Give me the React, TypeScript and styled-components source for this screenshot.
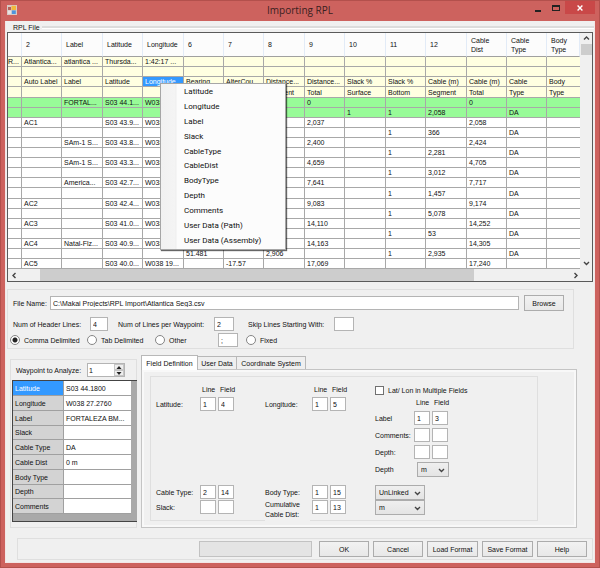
import React, { useState } from 'react';
import styled, { createGlobalStyle, css } from 'styled-components';

const GlobalStyle = createGlobalStyle`
  * { box-sizing: border-box; }
  html, body { margin: 0; padding: 0; }
  body, input, select, button, table {
    font-family: "Liberation Sans", Arial, sans-serif;
    font-size: 7px;
    line-height: 9px;
    color: #101010;
  }
`;

const Window = styled.div`
  min-height: 100vh;
  display: flex;
  flex-direction: column;
  background: #cd625e;
  border: 1px solid #b3504c;
  padding: 0 4px 4px;
`;

const TitleBar = styled.header`
  display: grid;
  grid-template-columns: 1fr auto 1fr;
  height: 20px;
  flex: none;
`;

const AppIcon = styled.svg`
  width: 10px;
  height: 10px;
  margin: 4px 0 0 2px;
`;

const Title = styled.h1`
  margin: 0;
  font-family: "Open Sans", "Noto Sans", sans-serif;
  font-size: 10px;
  font-weight: 400;
  line-height: 19px;
  color: #3a1f1e;
`;

const Controls = styled.div`
  display: flex;
  justify-content: flex-end;
  align-items: flex-start;
`;

const ControlButton = styled.button<{ $close?: boolean }>`
  display: flex;
  align-items: center;
  justify-content: center;
  width: ${p => (p.$close ? 30 : 18)}px;
  height: 13px;
  padding: 0;
  border: 0;
  background: ${p => (p.$close ? '#c94848' : 'transparent')};
`;

const Client = styled.main`
  flex: 1;
  display: flex;
  flex-direction: column;
  background: #f0f0f0;
  border: 1px solid #f3e6e6;
  border-top: 0;
`;

const LegendRow = styled.div`
  display: flex;
  align-items: center;
  gap: 2px;
  height: 11px;
  padding: 2px 0 0 7px;
  &::after {
    content: '';
    flex: 1;
    height: 2px;
    background: #dcdcdc;
    border-bottom: 1px solid #fff;
  }
`;

const GridFrame = styled.section`
  position: relative;
  display: grid;
  grid-template-columns: 1fr 12px;
  margin: 0 1px;
  border: 1px solid #5a5a5a;
  background: #fff;
`;

const DataGrid = styled.table`
  width: 100%;
  table-layout: fixed;
  border-collapse: separate;
  border-spacing: 0;
`;

const HeadCell = styled.th`
  height: 24px;
  padding: 0 8px 0 4px;
  font-weight: 400;
  text-align: left;
  vertical-align: middle;
  background: #fcfcfc;
  border-right: 1px solid #e2ebf7;
  border-bottom: 1px solid #a0a0a0;
`;

const GridRow = styled.tr<{ $tone: string }>`
  background: ${p => p.$tone};
  height: 10px;
  &:nth-child(10n + 4) { height: 11px; }
`;

const GridCell = styled.td<{ $selected?: boolean }>`
  padding: 0 0 0 2px;
  white-space: nowrap;
  overflow: hidden;
  border-right: 1px solid #a8a8a8;
  border-bottom: 1px solid #a8a8a8;
  &:first-child { padding-left: 0; }
  &:last-child { border-right: 0; }
  ${p => p.$selected && css`background: #3399ff; color: #fff;`}
`;

const VScroll = styled.div`
  display: flex;
  flex-direction: column;
  align-items: center;
  background: #f0f0f0;
`;

const HScroll = styled.div`
  grid-column: 1 / -1;
  display: flex;
  align-items: center;
  height: 12px;
  padding-right: 11px;
  background: #f0f0f0;
`;

const ScrollButton = styled.button`
  display: flex;
  align-items: center;
  justify-content: center;
  width: 12px;
  height: 11px;
  padding: 0;
  border: 0;
  background: transparent;
`;

const VThumb = styled.div`
  align-self: stretch;
  height: 11px;
  margin-left: 1px;
  background: #cdcdcd;
`;

const VSpace = styled.div` flex: 1; `;

const HTrack = styled.div`
  flex: 1;
  align-self: stretch;
  display: flex;
  padding-left: 20px;
`;

const HThumb = styled.div`
  width: 82%;
  background: #cdcdcd;
`;

const Menu = styled.div`
  position: absolute;
  left: 152px;
  top: 50px;
  width: 126px;
  height: 167px;
  padding: 1px;
  display: grid;
  grid-auto-rows: 1fr;
  background: linear-gradient(to right, #f1f1f1 0, #f4f4f4 14px, #eeeeee 15px, #fcfcfc 16px);
  border: 1px solid #a6a6a6;
  box-shadow: 1px 1px 1px rgba(0, 0, 0, 0.6);
`;

const MenuItem = styled.button`
  padding: 0 0 0 22px;
  border: 0;
  background: transparent;
  text-align: left;
  font-family: Roboto, "Open Sans", sans-serif;
  font-size: 8px;
  line-height: 12px;
`;

const groupBorder = css`
  border: 1px solid #dfdfdf;
`;

const FileGroup = styled.section`
  ${groupBorder}
  display: flex;
  flex-direction: column;
  margin: 7px 20px 0 1px;
  padding: 5px 9px 1px 2px;
`;

const FileRow = styled.div`
  display: grid;
  grid-template-columns: 37px 1fr 40px;
  align-items: center;
  padding-left: 3px;
`;

const CountRow = styled.div`
  display: grid;
  grid-template-columns: 77px 18px 106px 20px 100px 20px;
  align-items: center;
  padding: 6px 0 2px 3px;
`;

const DelimiterRow = styled.div`
  display: grid;
  grid-template-columns: 77px 68px 63px 20px 1fr;
  align-items: center;
`;

const Caption = styled.label<{ $lead?: number }>`
  padding-left: ${p => p.$lead ?? 0}px;
  white-space: nowrap;
`;

const TextBox = styled.input`
  width: 100%;
  min-width: 0;
  height: 14px;
  padding: 0 2px;
  background: #fff;
  border: 1px solid #b4b4b4;
  border-radius: 0;
  outline: 0;
`;

const PathBox = styled(TextBox)`
  width: calc(100% - 5px);
`;

const Button = styled.button<{ $width?: number }>`
  width: ${p => p.$width ?? 50}px;
  height: 16px;
  padding: 0;
  white-space: nowrap;
  background: linear-gradient(#f2f2f2, #e8e8e8);
  border: 1px solid #acacac;
`;

const Option = styled.label<{ $lead?: number }>`
  display: flex;
  align-items: center;
  gap: 4px;
  padding-left: ${p => p.$lead ?? 0}px;
  white-space: nowrap;
`;

const Radio = styled.input`
  appearance: none;
  flex: none;
  width: 10px;
  height: 10px;
  margin: 0;
  border: 1px solid #858585;
  border-radius: 50%;
  background: #fff;
  &:checked { background: radial-gradient(circle, #222 2px, #fff 3px); }
`;

const CheckBox = styled.input`
  appearance: none;
  flex: none;
  width: 9px;
  height: 9px;
  margin: 0;
  border: 1px solid #707070;
  background: #fff;
  &:checked { background: #444; }
`;

const Lower = styled.div`
  display: flex;
  gap: 4px;
  padding: 6px 17px 0 4px;
`;

const WaypointGroup = styled.section`
  ${groupBorder}
  flex: none;
  width: 127px;
  margin-top: 4px;
  padding: 0 0 5px 1px;
`;

const WaypointHeader = styled.div`
  display: grid;
  grid-template-columns: 71px 38px;
  align-items: center;
  height: 20px;
  padding-left: 4px;
`;

const Spinner = styled.div`
  display: flex;
  height: 14px;
  background: #fff;
  border: 1px solid #b4b4b4;
`;

const SpinInput = styled.input`
  flex: 1;
  min-width: 0;
  padding: 0 1px;
  border: 0;
  outline: 0;
  appearance: textfield;
  &::-webkit-inner-spin-button { appearance: none; margin: 0; }
`;

const SpinButtons = styled.div`
  display: flex;
  flex-direction: column;
  width: 10px;
`;

const SpinButton = styled.button`
  flex: 1;
  display: flex;
  align-items: center;
  justify-content: center;
  padding: 0;
  border: 1px solid #c6c6c6;
  background: #efefef;
  min-height: 0;
`;

const WaypointFrame = styled.div`
  height: 142px;
  margin-right: -1px;
  background: #a9a9a9;
  border: 1px solid #444;
  border-right: 0;
`;

const WaypointTable = styled.table`
  width: 118px;
  table-layout: fixed;
  border-collapse: separate;
  border-spacing: 0;
`;

const WaypointRow = styled.tr`
  height: 15px;
  &:nth-child(4n) { height: 14px; }
`;

const WaypointName = styled.th<{ $selected: boolean }>`
  width: 51px;
  padding: 0 0 0 2px;
  font-weight: 400;
  text-align: left;
  background: ${p => (p.$selected ? '#3399ff' : '#d3d3d3')};
  color: ${p => (p.$selected ? '#fff' : '#101010')};
  border-right: 1px solid #a0a0a0;
  border-bottom: 1px solid #a0a0a0;
`;

const WaypointValue = styled.td`
  padding: 0 0 0 2px;
  white-space: nowrap;
  background: #fff;
  border-bottom: 1px solid #a0a0a0;
`;

const Tabs = styled.section`
  flex: 1;
  display: flex;
  flex-direction: column;
`;

const TabList = styled.div`
  display: flex;
  align-items: flex-end;
  height: 14px;
`;

const Tab = styled.button<{ $active: boolean; $width: number }>`
  width: ${p => p.$width}px;
  height: ${p => (p.$active ? 15 : 13)}px;
  margin-bottom: ${p => (p.$active ? -1 : 0)}px;
  padding: 0;
  white-space: nowrap;
  background: ${p => (p.$active ? '#fff' : '#efefef')};
  border: 1px solid #b8b8b8;
  border-bottom: 0;
  border-left-width: ${p => (p.$active ? 1 : 0)}px;
  z-index: ${p => (p.$active ? 1 : 0)};
`;

const TabPanel = styled.div`
  flex: 1;
  padding: 6px 38px 6px 7px;
  background: #f0f0f0;
  border: 1px solid #c4c4c4;
  box-shadow: inset 0 0 0 2px #f8f8f8;
`;

const FieldGroup = styled.div`
  ${groupBorder}
  height: 100%;
  margin-left: 1px;
  padding: 8px 0 5px 5px;
`;

const Sections = styled.div`
  display: grid;
  grid-template-columns: 109px 110px 1fr;
  align-items: start;
  & + & { margin-top: 8px; }
`;

const FieldTable = styled.div<{ $label: number; $gap: number }>`
  display: grid;
  grid-template-columns: ${p => p.$label}px 16px 16px;
  column-gap: 2px;
  row-gap: ${p => p.$gap}px;
  align-items: center;
`;

const ColumnName = styled.span<{ $first?: boolean }>`
  ${p => p.$first && css`grid-column: 2;`}
  height: 10px;
  padding-left: 2px;
  line-height: 10px;
`;

const WideCheck = styled(Option)`
  grid-column: 1 / -1;
  height: 10px;
`;

const WrappedCaption = styled.label`
  align-self: start;
  height: 22px;
  margin-bottom: -8px;
  line-height: 10px;
  background: #f0f0f0;
`;

const Fields = styled.div`
  display: flex;
  flex-direction: column;
`;

const SelectBox = styled.div<{ $width: number }>`
  position: relative;
  width: ${p => p.$width}px;
  & > svg {
    position: absolute;
    right: 4px;
    top: 5px;
    pointer-events: none;
  }
`;

const Select = styled.select`
  appearance: none;
  display: block;
  width: 100%;
  height: 15px;
  padding: 0 3px;
  background: linear-gradient(#efefef, #e4e4e4);
  border: 1px solid #acacac;
  border-radius: 0;
`;

const UnitCell = styled.div`
  grid-column: 2 / -1;
  padding-left: 3px;
`;

const Footer = styled.footer`
  ${groupBorder}
  display: flex;
  justify-content: flex-end;
  align-items: center;
  gap: 4px;
  height: 22px;
  margin: 10px 1px 1px 11px;
  padding-right: 5px;
`;

const Progress = styled.div`
  width: 113px;
  height: 16px;
  margin-right: 3px;
  background: #e4e4e4;
  border: 1px solid #c2c2c2;
`;

const Chevron = ({ dir }: { dir: 'up' | 'down' | 'left' | 'right' }) => {
  const paths = {
    up: 'M1 4.5 3.5 2 6 4.5',
    down: 'M1 2 3.5 4.5 6 2',
    left: 'M4.5 1 2 3.5 4.5 6',
    right: 'M2.5 1 5 3.5 2.5 6',
  };
  return (
    <svg width="7" height="7" viewBox="0 0 7 7" aria-hidden="true">
      <path d={paths[dir]} fill="none" stroke="#444" strokeWidth="1.4" />
    </svg>
  );
};

const Triangle = ({ up }: { up?: boolean }) => (
  <svg width="6" height="3" viewBox="0 0 6 3" aria-hidden="true">
    <path d={up ? 'M0.5 3 3 0 5.5 3Z' : 'M0.5 0 3 3 5.5 0Z'} fill="#222" />
  </svg>
);

const columnWidths = [14, 40, 41, 40, 41, 40, 40, 41, 40, 41, 40, 41, 40, 40];

const headers = [
  '', '2', 'Label', 'Latitude', 'Longitude', '6', '7', '8', '9', '10', '11', '12',
  'Cable Dist', 'Cable Type', 'Body Type',
];

const cream = '#ffffe1';
const green = '#98fb98';
const white = '#ffffff';

type RowData = { tone: string; cells: Record<number, string> };

const point = (auto: string, label: string, lat: string, dist: string, cable: string, tone = white, lon = 'W038 27...'): RowData => ({
  tone,
  cells: { 1: auto, 2: label, 3: lat, 4: lon, 8: dist, 12: cable },
});

const leg = (cable: string, extra: Record<number, string> = {}, tone = white): RowData => ({
  tone,
  cells: { 10: '1', 11: cable, 13: 'DA', ...extra },
});

const rows: RowData[] = [
  { tone: cream, cells: { 0: 'R...', 1: 'Atlantica...', 2: 'atlantica ...', 3: 'Thursda...', 4: '1:42:17 ...' } },
  { tone: cream, cells: {} },
  {
    tone: cream,
    cells: {
      1: 'Auto Label', 2: 'Label', 3: 'Latitude', 4: 'Longitude', 5: 'Bearing', 6: 'AlterCou...',
      7: 'Distance...', 8: 'Distance...', 9: 'Slack %', 10: 'Slack %', 11: 'Cable (m)',
      12: 'Cable (m)', 13: 'Cable', 14: 'Body',
    },
  },
  {
    tone: cream,
    cells: { 7: 'Segment', 8: 'Total', 9: 'Surface', 10: 'Bottom', 11: 'Segment', 12: 'Total', 13: 'Type', 14: 'Type' },
  },
  point('', 'FORTAL...', 'S03 44.1...', '0', '0', green),
  leg('2,058', { 9: '1' }, green),
  point('AC1', '', 'S03 43.9...', '2,037', '2,058'),
  leg('366'),
  point('', 'SAm-1 S...', 'S03 43.8...', '2,400', '2,424'),
  leg('2,281'),
  point('', 'SAm-1 S...', 'S03 43.3...', '4,659', '4,705'),
  leg('3,012'),
  point('', 'America...', 'S03 42.7...', '7,641', '7,717'),
  leg('1,457'),
  point('AC2', '', 'S03 42.4...', '9,083', '9,174'),
  leg('5,078'),
  point('AC3', '', 'S03 41.0...', '14,110', '14,252'),
  leg('53'),
  point('AC4', 'Natal-Flz...', 'S03 40.9...', '14,163', '14,305'),
  leg('2,935', { 5: '51.481', 7: '2,906' }),
  { tone: white, cells: { 1: 'AC5', 3: 'S03 40.0...', 4: 'W038 19...', 6: '-17.57', 8: '17,069', 12: '17,240' } },
];

const menuItems = [
  'Latitude', 'Longitude', 'Label', 'Slack', 'CableType', 'CableDist', 'BodyType', 'Depth',
  'Comments', 'User Data (Path)', 'User Data (Assembly)',
];

const waypoint = [
  ['Latitude', 'S03 44.1800'],
  ['Longitude', 'W038 27.2760'],
  ['Label', 'FORTALEZA BM...'],
  ['Slack', ''],
  ['Cable Type', 'DA'],
  ['Cable Dist', '0 m'],
  ['Body Type', ''],
  ['Depth', ''],
  ['Comments', ''],
];

const tabs = [
  { name: 'Field Definition', width: 57 },
  { name: 'User Data', width: 39 },
  { name: 'Coordinate System', width: 69 },
];

const Pair = ({ id, name, line, field, wrapped }: {
  id: string; name: string; line: string; field: string; wrapped?: boolean;
}) => (
  <>
    {wrapped
      ? <WrappedCaption htmlFor={id}>{name}</WrappedCaption>
      : <Caption htmlFor={id}>{name}</Caption>}
    <TextBox id={id} defaultValue={line} />
    <TextBox aria-label={`${name} field`} defaultValue={field} />
  </>
);

const ColumnNames = () => (
  <>
    <ColumnName $first>Line</ColumnName>
    <ColumnName>Field</ColumnName>
  </>
);

const DropDown = ({ id, label, width, options }: {
  id: string; label?: string; width: number; options: string[];
}) => (
  <SelectBox $width={width}>
    <Select id={id} aria-label={label}>
      {options.map(o => <option key={o}>{o}</option>)}
    </Select>
    <Chevron dir="down" />
  </SelectBox>
);

export default function App() {
  const [delimiter, setDelimiter] = useState('comma');
  const [index, setIndex] = useState(1);
  const [tab, setTab] = useState(0);

  const radio = (value: string, text: string, lead = 0) => (
    <Option $lead={lead}>
      <Radio
        type="radio"
        name="delimiter"
        checked={delimiter === value}
        onChange={() => setDelimiter(value)}
      />
      {text}
    </Option>
  );

  return (
    <>
      <GlobalStyle />
      <Window>
        <TitleBar>
          <AppIcon viewBox="0 0 10 10" aria-hidden="true">
            <rect width="10" height="10" fill="#d9c9c4" />
            <rect x="1" y="2" width="3" height="3" fill="#b5645c" />
            <rect x="4.5" y="0.8" width="4.5" height="4.2" fill="#f3b93a" />
            <rect x="1" y="5.6" width="3.4" height="3.2" fill="#e9e4e4" />
            <rect x="4.8" y="5.4" width="4" height="3.6" fill="#4f94dc" />
          </AppIcon>
          <Title>Importing RPL</Title>
          <Controls>
            <ControlButton aria-label="Minimize">
              <svg width="6" height="10" viewBox="0 0 6 10"><path d="M0 7h6v2H0z" fill="#222" /></svg>
            </ControlButton>
            <ControlButton aria-label="Maximize">
              <svg width="8" height="6" viewBox="0 0 8 6"><path d="M0 0h8v6H0zM1 2v3h6V2z" fill="#222" fillRule="evenodd" /></svg>
            </ControlButton>
            <ControlButton $close aria-label="Close">
              <svg width="6" height="6" viewBox="0 0 6 6"><path d="M.6.6 5.4 5.4M5.4.6.6 5.4" stroke="#fff" strokeWidth="1.4" /></svg>
            </ControlButton>
          </Controls>
        </TitleBar>

        <Client>
          <LegendRow>RPL File</LegendRow>
          <GridFrame>
            <DataGrid>
              <colgroup>
                {columnWidths.map((w, i) => <col key={i} width={w} />)}
                <col />
              </colgroup>
              <thead>
                <tr>{headers.map((h, i) => <HeadCell key={i}>{h}</HeadCell>)}</tr>
              </thead>
              <tbody>
                {rows.map((row, r) => (
                  <GridRow key={r} $tone={row.tone}>
                    {headers.map((_, c) => (
                      <GridCell key={c} $selected={r === 2 && c === 4}>{row.cells[c]}</GridCell>
                    ))}
                  </GridRow>
                ))}
              </tbody>
            </DataGrid>
            <VScroll>
              <ScrollButton aria-label="Scroll up"><Chevron dir="up" /></ScrollButton>
              <VThumb />
              <VSpace />
              <ScrollButton aria-label="Scroll down"><Chevron dir="down" /></ScrollButton>
            </VScroll>
            <HScroll>
              <ScrollButton aria-label="Scroll left"><Chevron dir="left" /></ScrollButton>
              <HTrack><HThumb /></HTrack>
              <ScrollButton aria-label="Scroll right"><Chevron dir="right" /></ScrollButton>
            </HScroll>
            <Menu role="menu">
              {menuItems.map(item => <MenuItem key={item} role="menuitem">{item}</MenuItem>)}
            </Menu>
          </GridFrame>

          <FileGroup>
            <FileRow>
              <Caption htmlFor="file">File Name:</Caption>
              <PathBox id="file" defaultValue={'C:\\Makai Projects\\RPL Import\\Atlantica Seg3.csv'} />
              <Button $width={40}>Browse</Button>
            </FileRow>
            <CountRow>
              <Caption htmlFor="headerLines">Num of Header Lines:</Caption>
              <TextBox id="headerLines" defaultValue="4" />
              <Caption htmlFor="waypointLines" $lead={10}>Num of Lines per Waypoint:</Caption>
              <TextBox id="waypointLines" defaultValue="2" />
              <Caption htmlFor="skip" $lead={14}>Skip Lines Starting With:</Caption>
              <TextBox id="skip" />
            </CountRow>
            <DelimiterRow>
              {radio('comma', 'Comma Delimited')}
              {radio('tab', 'Tab Delimited')}
              {radio('other', 'Other')}
              <TextBox aria-label="Other delimiter" defaultValue=";" />
              {radio('fixed', 'Fixed', 8)}
            </DelimiterRow>
          </FileGroup>

          <Lower>
            <WaypointGroup>
              <WaypointHeader>
                <Caption htmlFor="waypoint">Waypoint to Analyze:</Caption>
                <Spinner>
                  <SpinInput
                    id="waypoint"
                    type="number"
                    value={index}
                    onChange={e => setIndex(Number(e.target.value))}
                  />
                  <SpinButtons>
                    <SpinButton aria-label="Next waypoint" onClick={() => setIndex(index + 1)}><Triangle up /></SpinButton>
                    <SpinButton aria-label="Previous waypoint" onClick={() => setIndex(Math.max(1, index - 1))}><Triangle /></SpinButton>
                  </SpinButtons>
                </Spinner>
              </WaypointHeader>
              <WaypointFrame>
                <WaypointTable>
                  <tbody>
                    {waypoint.map(([name, value], i) => (
                      <WaypointRow key={name}>
                        <WaypointName scope="row" $selected={i === 0}>{name}</WaypointName>
                        <WaypointValue>{value}</WaypointValue>
                      </WaypointRow>
                    ))}
                  </tbody>
                </WaypointTable>
              </WaypointFrame>
            </WaypointGroup>

            <Tabs>
              <TabList role="tablist">
                {tabs.map((t, i) => (
                  <Tab
                    key={t.name}
                    role="tab"
                    aria-selected={tab === i}
                    $active={tab === i}
                    $width={t.width}
                    onClick={() => setTab(i)}
                  >
                    {t.name}
                  </Tab>
                ))}
              </TabList>
              <TabPanel role="tabpanel">
                <FieldGroup>
                  <Sections>
                    <FieldTable $label={42} $gap={2}>
                      <ColumnNames />
                      <Pair id="lat" name="Latitude:" line="1" field="4" />
                    </FieldTable>
                    <FieldTable $label={45} $gap={2}>
                      <ColumnNames />
                      <Pair id="lon" name="Longitude:" line="1" field="5" />
                    </FieldTable>
                    <FieldTable $label={37} $gap={3}>
                      <WideCheck>
                        <CheckBox type="checkbox" />
                        Lat/ Lon in Multiple Fields
                      </WideCheck>
                      <ColumnNames />
                      <Pair id="label" name="Label" line="1" field="3" />
                      <Pair id="comments" name="Comments:" line="" field="" />
                      <Pair id="depth" name="Depth:" line="" field="" />
                      <Caption htmlFor="depthUnit">Depth</Caption>
                      <UnitCell><DropDown id="depthUnit" width={32} options={['m', 'ft']} /></UnitCell>
                    </FieldTable>
                  </Sections>
                  <Sections>
                    <FieldTable $label={42} $gap={1}>
                      <Pair id="cableType" name="Cable Type:" line="2" field="14" />
                      <Pair id="slack" name="Slack:" line="" field="" />
                    </FieldTable>
                    <FieldTable $label={45} $gap={1}>
                      <Pair id="bodyType" name="Body Type:" line="1" field="15" />
                      <Pair id="cableDist" name="Cumulative Cable Dist:" line="1" field="13" wrapped />
                    </FieldTable>
                    <Fields>
                      <DropDown id="link" label="Body type link" width={50} options={['UnLinked', 'Linked']} />
                      <DropDown id="distUnit" label="Cable distance unit" width={50} options={['m', 'ft']} />
                    </Fields>
                  </Sections>
                </FieldGroup>
              </TabPanel>
            </Tabs>
          </Lower>

          <Footer>
            <Progress role="progressbar" aria-label="Import progress" />
            <Button>OK</Button>
            <Button>Cancel</Button>
            <Button $width={51}>Load Format</Button>
            <Button $width={51}>Save Format</Button>
            <Button>Help</Button>
          </Footer>
        </Client>
      </Window>
    </>
  );
}
